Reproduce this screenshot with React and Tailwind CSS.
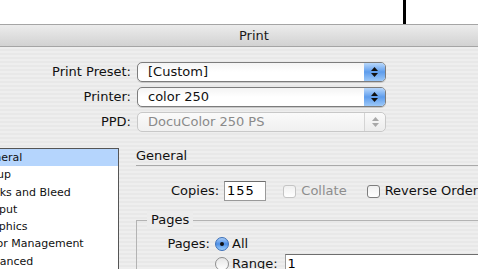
const Stepper = ({ disabled }) => (
  <div
    className={
      disabled
        ? "w-[21px] h-full border-l border-[#d4d4d4] flex flex-col items-center justify-center gap-[2px] rounded-r-[5px] bg-gradient-to-b from-[#fafafa] to-[#ececec]"
        : "w-[21px] h-full flex flex-col items-center justify-center gap-[2px] rounded-r-[4px] bg-gradient-to-b from-[#b9d8fb] via-[#5d9cec] to-[#9cc8f8]"
    }
  >
    <svg width="7" height="4" viewBox="0 0 7 4">
      <path d="M3.5 0L7 4H0z" fill={disabled ? "#a8a8a8" : "#111"} />
    </svg>
    <svg width="7" height="4" viewBox="0 0 7 4">
      <path d="M0 0H7L3.5 4z" fill={disabled ? "#a8a8a8" : "#111"} />
    </svg>
  </div>
);

const SelectRow = ({ label, value, disabled }) => (
  <div className="flex items-center h-[20px]">
    <div className="w-[131px] text-right text-[13px] text-[#111]">{label}</div>
    <div
      className={
        "ml-[6px] w-[249px] h-[20px] flex items-stretch rounded-[5px] border " +
        (disabled
          ? "border-[#c8c8c8] bg-gradient-to-b from-[#fafafa] to-[#f0f0f0] text-[#8a8a8a]"
          : "border-[#7c7c7c] bg-gradient-to-b from-[#f4f4f4] via-[#ffffff] to-[#ffffff] text-[#111] shadow-[0_1px_0_#c9c9c9]")
      }
    >
      <div className="flex-1 pl-[10px] text-[13px] leading-[18px]">{value}</div>
      <Stepper disabled={disabled} />
    </div>
  </div>
);

const Radio = ({ on }) => (
  <div
    className={
      "w-[14px] h-[14px] rounded-full border flex items-center justify-center " +
      (on
        ? "border-[#3b6fb8] bg-gradient-to-b from-[#a9cdf7] via-[#4d8fe6] to-[#9fd0fb]"
        : "border-[#8e8e8e] bg-gradient-to-b from-[#e6e6e6] to-[#ffffff]")
    }
  >
    {on && <div className="w-[4px] h-[4px] rounded-full bg-[#111]" />}
  </div>
);

const Checkbox = ({ disabled }) => (
  <div
    className={
      "w-[13px] h-[13px] rounded-[3px] border bg-gradient-to-b from-[#f0f0f0] to-[#ffffff] " +
      (disabled ? "border-[#c4c4c4]" : "border-[#7d7d7d]")
    }
  />
);

export default function App() {
  const items = ["General", "Setup", "Marks and Bleed", "Output", "Graphics", "Color Management", "Advanced"];

  return (
    <div className="w-[478px] h-[269px] overflow-hidden bg-white font-['DejaVu_Sans',sans-serif]">
      {/* desktop strip above the sheet */}
      <div className="h-[24px] bg-white">
        <div className="ml-[403px] w-[3px] h-full bg-black" />
      </div>

      {/* title bar */}
      <div className="h-[23px] border-t border-b border-[#a5a5a5] bg-gradient-to-b from-[#ececec] to-[#d2d2d2] flex items-center">
        <span className="pl-[239px] text-[13px] text-[#1a1a1a]">Print</span>
      </div>

      {/* body */}
      <div className="h-[222px] bg-[repeating-linear-gradient(180deg,#eeeeee_0px,#eeeeee_2px,#e8e8e8_2px,#e8e8e8_4px)] pt-[15px]">
        <div className="flex flex-col gap-[5px]">
          <SelectRow label="Print Preset:" value="[Custom]" />
          <SelectRow label="Printer:" value="color 250" />
          <SelectRow label="PPD:" value="DocuColor 250 PS" disabled />
        </div>

        <div className="flex mt-[16px]">
          {/* panel list */}
          <div className="-ml-[31px] w-[150px] h-[130px] shrink-0 bg-white border border-[#555]">
            {items.map((it, i) => (
              <div
                key={it}
                className={
                  "h-[17.3px] pl-[9px] text-[11px] leading-[17px] text-[#111] whitespace-nowrap " +
                  (i === 0 ? "bg-[#b5d5fd]" : "")
                }
              >
                {it}
              </div>
            ))}
          </div>

          {/* general panel */}
          <div className="ml-[17px] flex-1 min-w-0">
            <div className="text-[13px] leading-[16px] text-[#111] border-b border-[#a9a9a9] pb-[1px] -mr-[10px]">General</div>

            <div className="flex items-center mt-[15px] h-[20px] whitespace-nowrap">
              <span className="ml-[35px] text-[13px] text-[#111]">Copies:</span>
              <div className="ml-[5px] w-[46px] h-[20px] bg-white border border-[#9a9a9a] border-t-[#6e6e6e] pl-[2px] text-[13px] leading-[18px] tracking-[1px]">155</div>
              <div className="ml-[17px] flex items-center gap-[5px]">
                <Checkbox disabled />
                <span className="text-[13px] text-[#8d8d8d]">Collate</span>
              </div>
              <div className="ml-[20px] flex items-center gap-[5px]">
                <Checkbox />
                <span className="text-[13px] text-[#111]">Reverse Order</span>
              </div>
            </div>

            {/* pages group */}
            <div className="relative mt-[19px] h-[60px] border-t border-l border-[#b3b3b3] -mr-[20px]">
              <span className="absolute -top-[10px] left-[10px] px-[4px] bg-[#ececec] text-[13px] leading-[18px] text-[#111]">Pages</span>
              <div className="pt-[15px] flex flex-col gap-[4px]">
                <div className="flex items-center h-[16px]">
                  <span className="w-[73px] text-right text-[13px] text-[#111]">Pages:</span>
                  <div className="ml-[5px]"><Radio on /></div>
                  <span className="ml-[3px] text-[13px] text-[#111]">All</span>
                </div>
                <div className="flex items-center h-[16px]">
                  <div className="ml-[78px]"><Radio /></div>
                  <span className="ml-[3px] text-[13px] text-[#111]">Range:</span>
                  <div className="ml-[7px] flex-1 h-[20px] bg-white border border-[#9a9a9a] border-t-[#6e6e6e] pl-[2px] text-[13px] leading-[18px]">1</div>
                </div>
              </div>
            </div>
          </div>
        </div>
      </div>
    </div>
  );
}
